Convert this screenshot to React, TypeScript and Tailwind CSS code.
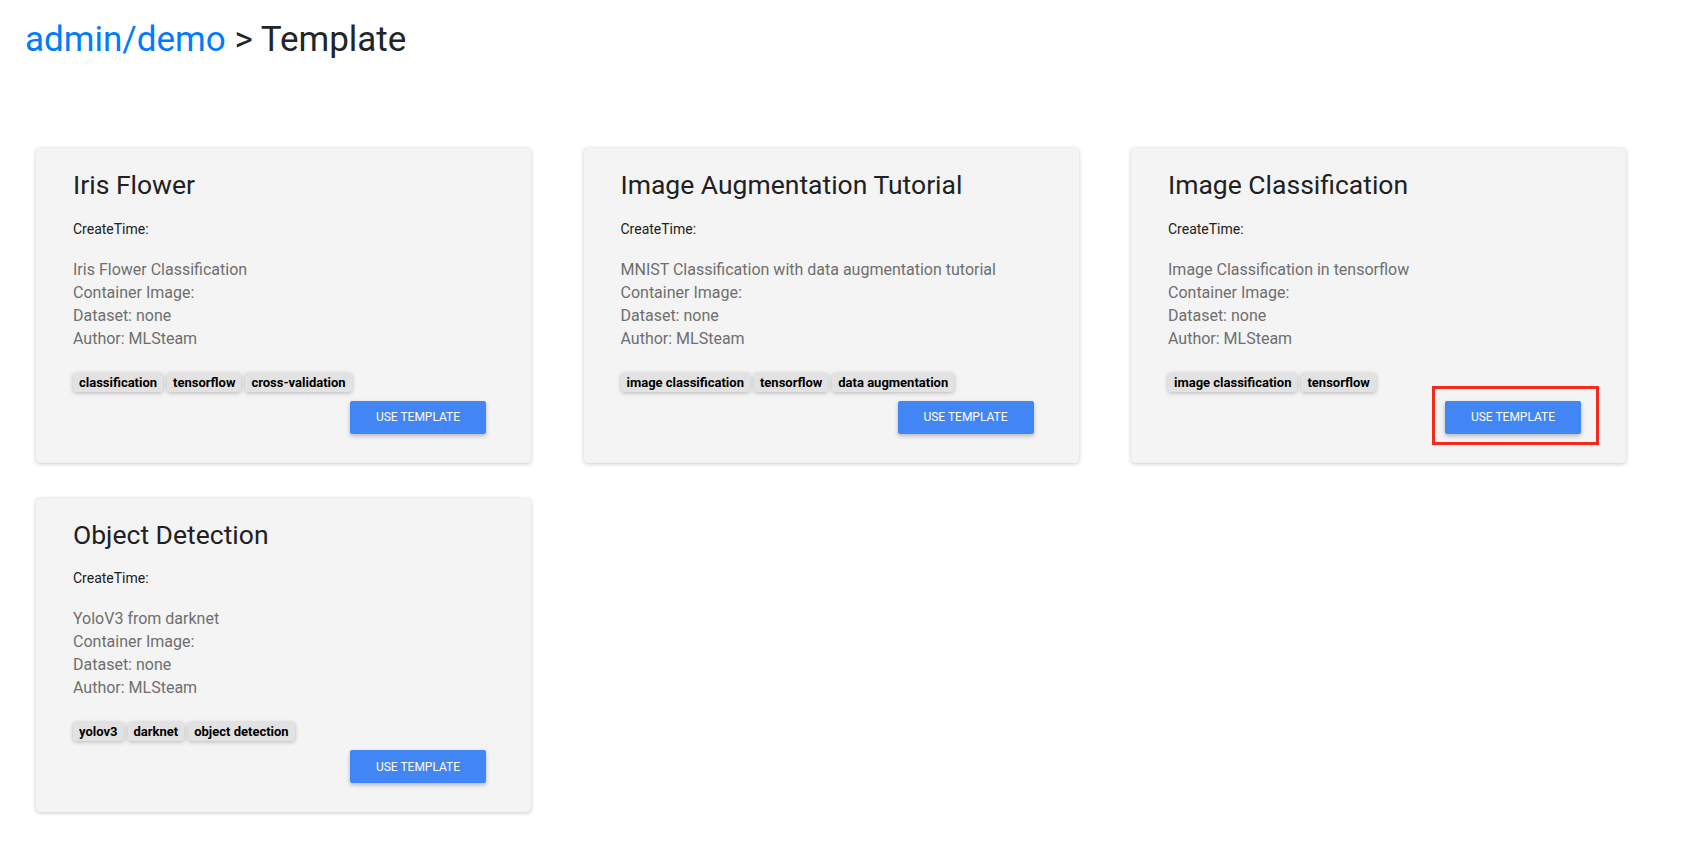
import React from "react";

type Template = {
  name: string;
  description: string;
  tags: string[];
  highlighted?: boolean;
};

const templates: Template[] = [
  {
    name: "Iris Flower",
    description: "Iris Flower Classification",
    tags: ["classification", "tensorflow", "cross-validation"],
  },
  {
    name: "Image Augmentation Tutorial",
    description: "MNIST Classification with data augmentation tutorial",
    tags: ["image classification", "tensorflow", "data augmentation"],
  },
  {
    name: "Image Classification",
    description: "Image Classification in tensorflow",
    tags: ["image classification", "tensorflow"],
    highlighted: true,
  },
  {
    name: "Object Detection",
    description: "YoloV3 from darknet",
    tags: ["yolov3", "darknet", "object detection"],
  },
];

function TemplateCard({ template }: { template: Template }) {
  return (
    <div className="flex flex-col rounded bg-[#f4f4f4] pl-[37px] pr-[45px] pt-5 pb-[29px] shadow-[0_1px_4px_rgba(0,0,0,0.2),0_0_1px_rgba(0,0,0,0.1)]">
      <h3 className="text-[26.5px] leading-[33.6px] font-normal text-[#212121]">
        {template.name}
      </h3>
      <p className="mt-[17px] text-[14px] leading-5 text-[#212121]">CreateTime:</p>
      <div className="mt-[19px] text-[16px] leading-[23px] text-[#6f6f6f]">
        <p>{template.description}</p>
        <p>Container Image:</p>
        <p>Dataset: none</p>
        <p>Author: MLSteam</p>
      </div>
      <div className="mt-[23px] flex gap-1">
        {template.tags.map((tag) => (
          <span
            key={tag}
            className="rounded-[3px] bg-[#e2e2e2] px-[6px] text-[13px] leading-[19px] font-bold text-black shadow-[0_1px_4px_rgba(0,0,0,0.25)]"
          >
            {tag}
          </span>
        ))}
      </div>
      <div className="mt-[9px] flex justify-end">
        <span className="relative">
          <button className="h-[33px] w-[136px] rounded-[2px] bg-[#4285f4] text-[12px] font-normal text-white shadow-[0_2px_4px_rgba(0,0,0,0.25)]">
            USE TEMPLATE
          </button>
          {template.highlighted && (
            <span className="pointer-events-none absolute -top-[15px] -bottom-[11px] -left-[13px] -right-[18px] border-[3px] border-[#f42b1c]" />
          )}
        </span>
      </div>
    </div>
  );
}

export default function App() {
  return (
    <div className="min-h-screen bg-white font-['Roboto','Liberation_Sans',sans-serif]">
      <h1 className="px-[25px] pt-[19px] text-[35px] leading-[42px] font-normal text-[#212529]">
        <span className="text-[#007bff]">admin/demo</span> &gt; Template
      </h1>
      <div className="mt-[87px] grid grid-cols-[repeat(3,495px)] gap-x-[52.5px] gap-y-[35px] pl-9 pb-10">
        {templates.map((t) => (
          <TemplateCard key={t.name} template={t} />
        ))}
      </div>
    </div>
  );
}
